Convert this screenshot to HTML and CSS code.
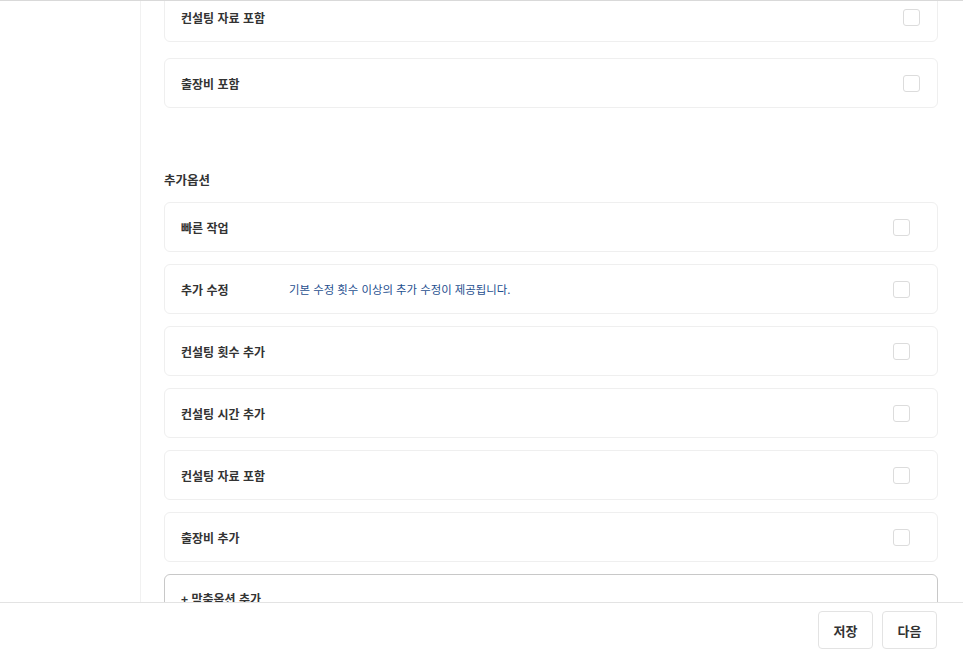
FILE: index.html
```html
<!DOCTYPE html>
<html lang="ko">

<head>
    <meta charset="UTF-8">
    <meta name="viewport" content="width=device-width, initial-scale=1.0">
    <title>옵션 설정</title>
    <link rel="stylesheet" href="styles.css">
</head>

<body>
    <div id="wrap">
        <div class="side"></div>
        <div class="main">
            <div class="inner">
                <ul class="opt-list basic">
                    <li class="opt">
                        <span class="label">컨설팅 자료 포함</span>
                        <span class="check"></span>
                    </li>
                    <li class="opt">
                        <span class="label">출장비 포함</span>
                        <span class="check"></span>
                    </li>
                </ul>

                <h3 class="sub-title">추가옵션</h3>
                <ul class="opt-list extra">
                    <li class="opt">
                        <span class="label">빠른 작업</span>
                        <span class="check"></span>
                    </li>
                    <li class="opt">
                        <span class="label">추가 수정</span>
                        <span class="desc">기본 수정 횟수 이상의 추가 수정이 제공됩니다.</span>
                        <span class="check"></span>
                    </li>
                    <li class="opt">
                        <span class="label">컨설팅 횟수 추가</span>
                        <span class="check"></span>
                    </li>
                    <li class="opt">
                        <span class="label">컨설팅 시간 추가</span>
                        <span class="check"></span>
                    </li>
                    <li class="opt">
                        <span class="label">컨설팅 자료 포함</span>
                        <span class="check"></span>
                    </li>
                    <li class="opt">
                        <span class="label">출장비 추가</span>
                        <span class="check"></span>
                    </li>
                    <li class="opt custom">
                        <span class="label">+ 맞춤옵션 추가</span>
                    </li>
                </ul>
            </div>
        </div>
    </div>
    <div class="footer">
        <button class="btn">저장</button>
        <button class="btn">다음</button>
    </div>
</body>

</html>
```

FILE: styles.css
```css
* {
    margin: 0;
    padding: 0;
    box-sizing: border-box;
}

ul,ol,li {
    list-style: none;
}

html, body {
    height: 100%;
    overflow: hidden;
}

body {
    font-family: "Noto Sans CJK KR", "Noto Sans", sans-serif;
    color: #333;
    background: #fff;
}

#wrap {
    display: flex;
    height: 100%;
    border-top: 1px solid #d9d9d9;
}

#wrap .side {
    width: 141px;
    flex-shrink: 0;
    border-right: 1px solid #f1f1f1;
}

#wrap .main {
    flex: 1;
    overflow: hidden;
    padding: 0 25px 0 23px;
}

/* the list is scrolled down a bit */
#wrap .inner {
    margin-top: -9px;
}

.opt-list.basic {
    display: flex;
    flex-direction: column;
    gap: 16px;
}

.opt-list.extra {
    display: flex;
    flex-direction: column;
    gap: 12px;
}

.sub-title {
    margin: 64px 0 14px;
    font-size: 12.5px;
    font-weight: 700;
    line-height: 16px;
    color: #333;
}

.opt {
    display: flex;
    align-items: center;
    height: 50px;
    padding: 0 17px 0 16px;
    border: 1px solid #efefef;
    border-radius: 6px;
}

.opt .label {
    width: 108px;
    font-size: 12px;
    font-weight: 700;
    color: #333;
}

.opt .desc {
    font-size: 11.4px;
    color: #1f4f8f;
}

.opt .check {
    margin-left: auto;
    width: 17px;
    height: 17px;
    border: 1px solid #dcdcdc;
    border-radius: 3px;
}

.extra .opt {
    padding-right: 27px;
}

.opt.custom {
    border-color: #c8c8c8;
    align-items: flex-start;
    padding-top: 15px;
}

.footer {
    position: fixed;
    left: 0;
    right: 0;
    bottom: 0;
    height: 52px;
    display: flex;
    justify-content: flex-end;
    gap: 9px;
    padding: 8px 26px 0 0;
    background: #fff;
    border-top: 1px solid #e3e3e3;
}

.footer .btn {
    width: 55px;
    height: 38px;
    font-family: inherit;
    font-size: 13px;
    font-weight: 700;
    color: #333;
    background: #fff;
    border: 1px solid #e3e3e3;
    border-radius: 4px;
    cursor: pointer;
}
```
